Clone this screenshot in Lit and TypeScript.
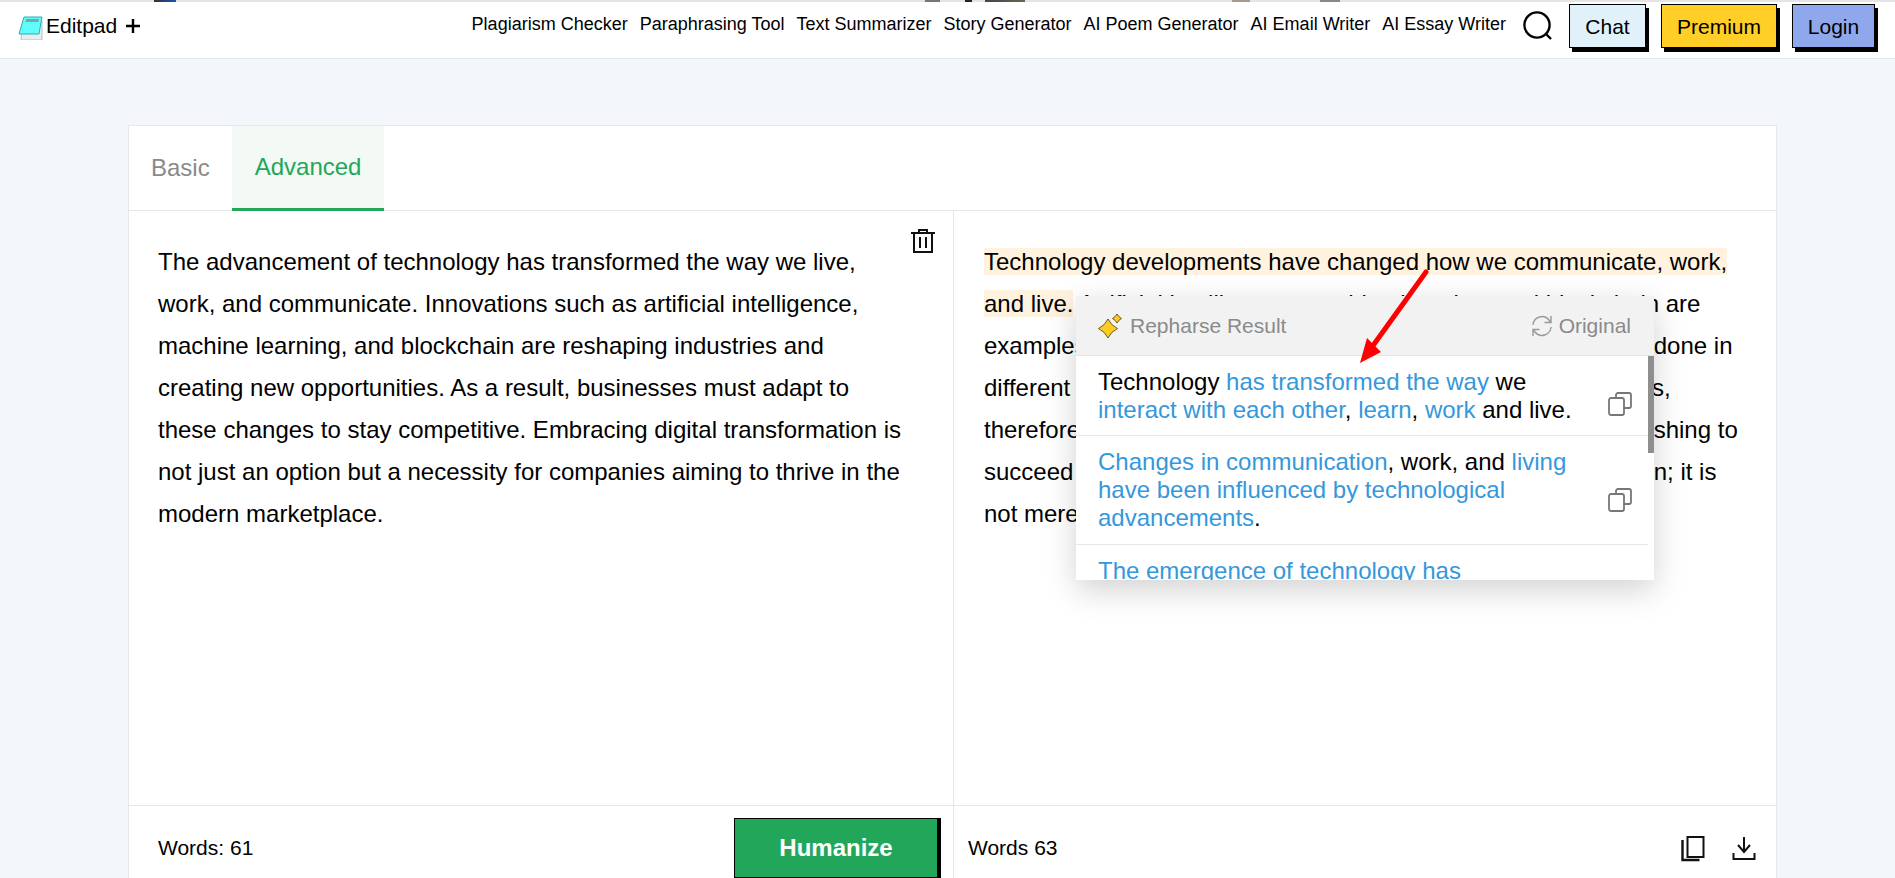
import { LitElement, css, html } from "lit";
import { customElement } from "lit/decorators.js";

const NAV = ["Plagiarism Checker", "Paraphrasing Tool", "Text Summarizer", "Story Generator", "AI Poem Generator", "AI Email Writer", "AI Essay Writer"];

const copyIcon = html`<svg class="copy" viewBox="0 0 24 24" fill="none" stroke="#777" stroke-width="1.8"><path d="M8 6V3a2 2 0 0 1 2-2h11a2 2 0 0 1 2 2v11a2 2 0 0 1-2 2h-5"/><rect x="1" y="6" width="15" height="17" rx="2"/></svg>`;

@customElement("app-root")
export class AppRoot extends LitElement {
  static styles = css`
    :host {
      display: block;
      height: 878px;
      overflow: hidden;
      background: #f3f6fb;
      font-family: "Liberation Sans", Arial, sans-serif;
      color: #000;
    }
    .strip {
      height: 2px;
      background: linear-gradient(90deg,
        #e5e5e5 154px, #333 154px, #1d4fb8 176px, #e5e5e5 176px,
        #e5e5e5 925px, #777 925px, #777 940px, #e5e5e5 940px,
        #e5e5e5 965px, #222 965px, #222 972px, #e5e5e5 972px,
        #e5e5e5 985px, #444 985px, #665 1025px, #e5e5e5 1025px,
        #e5e5e5 1232px, #a98 1232px, #a98 1250px, #e5e5e5 1250px,
        #e5e5e5 1320px, #888 1320px, #888 1340px, #e5e5e5 1340px);
    }
    header {
      height: 57px;
      box-sizing: border-box;
      background: #fff;
      border-bottom: 1px solid #e5e7eb;
      display: flex;
      align-items: center;
      padding: 0 20px 8px 18px;
    }
    .logo { width: 26px; height: 24px; margin: 3px 2px 0 0; }
    .brand { font-size: 21px; }
    .plus { width: 16px; height: 16px; margin-left: 8px; }
    nav {
      margin-left: auto;
      margin-bottom: 3px;
      display: flex;
      gap: 12px;
      font-size: 18px;
    }
    .search { width: 30px; height: 30px; margin: 0 16px 0 17px; }
    .btn {
      height: 44px;
      box-sizing: border-box;
      border: 1px solid #000;
      box-shadow: 3px 4px 0 #000;
      font-size: 21px;
      padding-top: 1px;
      display: flex;
      align-items: center;
      justify-content: center;
    }
    .chat { width: 77px; background: #e0f1fa; margin-right: 15px; }
    .premium { width: 116px; background: #ffcf28; margin-right: 15px; }
    .login { width: 83px; background: #8fa8ec; }
    main { padding: 66px 118px 0 128px; }
    .card {
      background: #fff;
      border: 1px solid #e5e7eb;
      border-bottom: 0;
      height: 764px;
      display: flex;
      flex-direction: column;
    }
    .tabs {
      height: 84px;
      flex: none;
      display: flex;
      border-bottom: 1px solid #e5e7eb;
      font-size: 24px;
    }
    .tab {
      padding: 0 22px;
      display: flex;
      align-items: center;
      color: #8a8a8a;
    }
    .tab.active {
      padding: 0 23px;
      background: #f3f9f5;
      color: #22a75a;
      border-bottom: 3px solid #22a75a;
      margin-bottom: -1px;
    }
    .panes { flex: 1; display: flex; min-height: 0; }
    .pane {
      position: relative;
      box-sizing: border-box;
      padding: 30px 45px 0 29px;
      font-size: 24px;
      line-height: 42px;
    }
    .left { width: 824px; flex: none; }
    .right { flex: 1; border-left: 1px solid #e5e7eb; padding: 30px 34px 0 30px; }
    .pane p { margin: 0; }
    .hl { background: #fff3df; }
    .trash { position: absolute; top: 18px; right: 18px; width: 24px; height: 24px; }
    .footer { height: 84px; flex: none; display: flex; border-top: 1px solid #e5e7eb; font-size: 21px; }
    .foot-left, .foot-right { display: flex; align-items: center; box-sizing: border-box; }
    .foot-left { width: 824px; flex: none; padding-left: 29px; justify-content: space-between; }
    .foot-right { flex: 1; border-left: 1px solid #e5e7eb; padding: 0 20px 0 14px; }
    .humanize {
      width: 204px;
      height: 60px;
      margin-right: 15px;
      box-sizing: border-box;
      background: #22a75a;
      border: 1px solid #000;
      box-shadow: 3px 0 0 #000;
      color: #fff;
      font-weight: bold;
      font-size: 24px;
      display: flex;
      align-items: center;
      justify-content: center;
    }
    .tools { margin-left: auto; display: flex; gap: 27px; }
    .tools svg { width: 24px; height: 27px; display: block; }
    .popup {
      position: absolute;
      left: 122px;
      top: 85px;
      width: 578px;
      height: 284px;
      background: #fff;
      box-shadow: 0 10px 30px rgba(0, 0, 0, 0.18);
      display: flex;
      flex-direction: column;
      overflow: hidden;
      line-height: 28px;
    }
    .pop-head {
      height: 59px;
      flex: none;
      background: #f2f2f2;
      border-bottom: 1px solid #e5e5e5;
      display: flex;
      align-items: center;
      padding: 0 23px 0 22px;
      color: #8a8a8a;
      font-size: 21px;
    }
    .spark { width: 24px; height: 24px; margin-right: 8px; }
    .refresh { width: 22px; height: 22px; margin: 0 6px 0 auto; }
    .list { flex: 1; position: relative; overflow: hidden; padding-right: 6px; }
    .bar { position: absolute; top: 0; right: 0; width: 6px; height: 97px; background: #8e8e8e; }
    .item {
      display: flex;
      align-items: center;
      justify-content: space-between;
      padding: 12px 16px 11px 22px;
      border-bottom: 1px solid #e5e7eb;
    }
    .item + .item { padding-bottom: 12px; }
    .item .txt { width: 480px; }
    .item b { font-weight: normal; color: #3498db; }
    .copy { width: 24px; height: 24px; flex: none; margin-top: 16px; }
    .item + .item .copy { margin-top: 20px; }
    .arrow { position: absolute; left: 0; top: 0; width: 1895px; height: 878px; pointer-events: none; }
  `;

  render() {
    return html`
      <div class="strip"></div>
      <header>
        <svg class="logo" viewBox="0 0 26 24">
          <path d="M5 5h19v19H3z" fill="#e8eeee" stroke="#b5c0c0"/>
          <path d="M6 1h18l-3 17H1z" fill="#5ffcfc" stroke="#3aa8b0"/>
          <path d="M8 3h13l-.6 3H7.4z" fill="#7aa8a8"/>
        </svg>
        <span class="brand">Editpad</span>
        <svg class="plus" viewBox="0 0 16 16" fill="none" stroke="#000" stroke-width="2.4"><path d="M8 1v14M1 8h14"/></svg>
        <nav>${NAV.map((n) => html`<span>${n}</span>`)}</nav>
        <svg class="search" viewBox="0 0 30 30" fill="none" stroke="#000" stroke-width="2.4"><circle cx="14" cy="14" r="12.6"/><path d="M23 23l5 5"/></svg>
        <div class="btn chat">Chat</div>
        <div class="btn premium">Premium</div>
        <div class="btn login">Login</div>
      </header>
      <main>
        <div class="card">
          <div class="tabs">
            <div class="tab">Basic</div>
            <div class="tab active">Advanced</div>
          </div>
          <div class="panes">
            <div class="pane left">
              <p>The advancement of technology has transformed the way we live, work, and communicate. Innovations such as artificial intelligence, machine learning, and blockchain are reshaping industries and creating new opportunities. As a result, businesses must adapt to these changes to stay competitive. Embracing digital transformation is not just an option but a necessity for companies aiming to thrive in the modern marketplace.</p>
              <svg class="trash" viewBox="0 0 24 24" fill="none" stroke="#111" stroke-width="2"><path d="M0 4h24M8 3V1h8v2M3 4v19h18V4M9 8v11M15 8v11"/></svg>
            </div>
            <div class="pane right">
              <p><span class="hl">Technology developments have changed how we communicate, work, and live.</span> Artificial intelligence, machine learning, and blockchain are examples of innovations that are now changing how things are done in different industries, bringing big new openings for all businesses, therefore firms have to rapidly keep up with these changes if wishing to succeed and stay ahead. Going digital is really the main solution; it is not merely an option but a need for firms.</p>
              <div class="popup">
                <div class="pop-head">
                  <svg class="spark" viewBox="0 0 24 24"><path d="M10 5Q13 11.500 19.500 14.500Q13 17.500 10 24Q7 17.500 .5 14.500Q7 11.500 10 5z" fill="#ffcc22" stroke="#5a4a10" stroke-width=".9"/><path d="M19 0Q20.500 3 23.500 4.500Q20.500 6 19 9Q17.500 6 14.500 4.500Q17.500 3 19 0z" fill="#ffcc22" stroke="#5a4a10" stroke-width=".9"/></svg>
                  <span>Repharse Result</span>
                  <svg class="refresh" viewBox="0 0 22 22" fill="none" stroke="#999" stroke-width="1.4"><path d="M2 10a9 9 0 0 1 16-5l2 2.500M20 12a9 9 0 0 1-16 5l-2-2.500M20 1v6.500h-6.500M2 21v-6.500h6.500"/></svg>
                  <span>Original</span>
                </div>
                <div class="list">
                  <div class="bar"></div>
                  <div class="item">
                    <div class="txt">Technology <b>has transformed the way</b> we <b>interact with each other</b>, <b>learn</b>, <b>work</b> and live.</div>
                    ${copyIcon}
                  </div>
                  <div class="item">
                    <div class="txt"><b>Changes in communication</b>, work, and <b>living have been influenced by technological advancements</b>.</div>
                    ${copyIcon}
                  </div>
                  <div class="item">
                    <div class="txt"><b>The emergence of technology has</b></div>
                  </div>
                </div>
              </div>
            </div>
          </div>
          <div class="footer">
            <div class="foot-left">
              <span>Words: 61</span>
              <div class="humanize">Humanize</div>
            </div>
            <div class="foot-right">
              <span>Words 63</span>
              <div class="tools">
                <svg viewBox="0 0 24 27" fill="none" stroke="#111" stroke-width="2"><rect x="6.500" y="2" width="16" height="20"/><path d="M1.500 5v20h17" stroke-width="2.400"/></svg>
                <svg viewBox="0 0 24 27" fill="none" stroke="#111" stroke-width="2"><path d="M12 2v15M6 10l6 7 6-7M1.500 18v6h21v-6"/></svg>
              </div>
            </div>
          </div>
        </div>
      </main>
      <svg class="arrow" viewBox="0 0 1895 878">
        <path d="M1426 272L1372 347" stroke="#f00" stroke-width="5" stroke-linecap="round"/>
        <path d="M1360 363L1367 338L1381 352z" fill="#f00"/>
      </svg>
    `;
  }
}
